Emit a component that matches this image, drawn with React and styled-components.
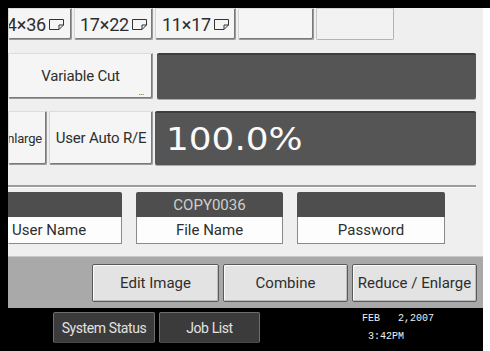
import React from 'react'
import styled, { createGlobalStyle } from "styled-components";

const GlobalStyle = createGlobalStyle`
  html, body {
    margin: 0;
    padding: 0;
    background: #fff;
  }
  body {
    font-family: Roboto, "Liberation Sans", sans-serif;
  }
`;

const Frame = styled.div`
  width: 490px;
  border-top: 8px solid #000;
`;

const Screen = styled.div`
  width: 475px;
  height: 343px;
  border-left: 8px solid #000;
  background: #efefef;
  display: flex;
  flex-direction: column;
  overflow: hidden;
`;

const Row = styled.div`
  display: flex;
  gap: ${p => p.gap || 2}px;
  height: ${p => p.h}px;
  margin-top: ${p => p.top || 0}px;
  flex-shrink: 0;
`;

const Key = styled.div`
  position: relative;
  box-sizing: border-box;
  width: ${p => p.w}px;
  flex-shrink: 0;
  display: flex;
  align-items: center;
  justify-content: ${p => (p.clip ? "flex-end" : "center")};
  padding-right: ${p => (p.clip ? p.pr || 4 : 0)}px;
  overflow: hidden;
  white-space: nowrap;
  background: ${p => (p.flat ? "#f2f2f2" : "#f5f5f5")};
  border: 1px solid ${p => (p.flat ? "#b4b4b4" : "#9a9a9a")};
  border-top-color: ${p => (p.flat ? "#d0d0d0" : "#dcdcdc")};
  border-left-color: ${p => (p.flat ? "#c8c8c8" : "#d6d6d6")};
  box-shadow: ${p => (p.flat ? "none" : "inset -1px -1px 0 #7a7a7a")};
  border-radius: 0 0 2px 2px;
  color: #2e2e2e;
  font-size: ${p => p.fs || 15}px;
  letter-spacing: -0.2px;
`;

const Dots = styled.span`
  position: absolute;
  right: 8px;
  bottom: 1px;
  font-size: 9px;
  line-height: 9px;
  color: #444;
  letter-spacing: -0.5px;
`;

const Display = styled.div`
  box-sizing: border-box;
  width: ${p => p.w}px;
  flex-shrink: 0;
  background: #555555;
  border-top: 2px solid #3e3e3e;
  border-radius: 2px;
  box-shadow: 0 1px 0 #aaa;
  display: flex;
  align-items: center;
  padding-left: 11px;
  color: #fafafa;
  font-family: "DejaVu Sans", sans-serif;
  font-size: 32px;
`;

const Ratio = styled.span`
  display: inline-block;
  transform: scaleX(1.12);
  transform-origin: left center;
`;

const Rule = styled.div`
  height: 2px;
  width: 468px;
  margin-top: 20px;
  background: #9c9c9c;
  border-bottom: 1px solid #fbfbfb;
  flex-shrink: 0;
`;

const Field = styled.div`
  width: ${p => p.w}px;
  flex-shrink: 0;
  display: flex;
  flex-direction: column;
  overflow: hidden;
`;

const FieldHead = styled.div`
  box-sizing: border-box;
  height: 25px;
  background: #4e4e4e;
  border-radius: ${p => (p.clip ? "0 2px 0 0" : "2px 2px 0 0")};
  color: #cfcfcf;
  font-size: 15px;
  display: flex;
  align-items: center;
  justify-content: center;
`;

const FieldBody = styled.div`
  box-sizing: border-box;
  height: 27px;
  background: #fdfdfd;
  border: 1px solid #8a8a8a;
  border-top: none;
  border-left-color: ${p => (p.clip ? "transparent" : "#8a8a8a")};
  display: flex;
  align-items: center;
  justify-content: ${p => (p.clip ? "flex-start" : "center")};
  padding-left: ${p => (p.clip ? 3 : 0)}px;
  color: #2e2e2e;
  font-size: 15px;
`;

const Tray = styled.div`
  margin-top: 12px;
  height: 51px;
  flex-shrink: 0;
  background: #a9a9a9;
  border-top: 1px solid #c8c8c8;
  display: flex;
  align-items: center;
  justify-content: flex-end;
  gap: 4px;
  padding-right: 6px;
`;

const TrayKey = styled.div`
  box-sizing: border-box;
  width: ${p => p.w}px;
  height: 38px;
  background: #e3e3e3;
  border: 1px solid #5a5a5a;
  box-shadow: inset 1px 1px 0 #fafafa, inset -1px -1px 0 #bdbdbd;
  border-radius: 2px;
  display: flex;
  align-items: center;
  justify-content: center;
  color: #2e2e2e;
  font-size: 15px;
`;

const StatusBar = styled.div`
  flex: 1;
  background: #000;
  display: flex;
  align-items: flex-start;
  padding-top: 4px;
  padding-left: 45px;
  gap: 4px;
`;

const DarkKey = styled.div`
  box-sizing: border-box;
  width: ${p => p.w}px;
  height: 31px;
  background: #3b3b3b;
  border: 1px solid #6e6e6e;
  border-bottom-color: #4a4a4a;
  border-radius: 2px;
  display: flex;
  align-items: center;
  justify-content: center;
  color: #e2e2e2;
  font-size: 14px;
  letter-spacing: -0.4px;
`;

const Clock = styled.div`
  margin-left: 98px;
  margin-top: -2px;
  color: #f0f0f0;
  font-family: "Liberation Mono", "DejaVu Sans Mono", monospace;
  font-size: 10px;
  line-height: 18px;
  white-space: pre;
`;

const SheetIcon = styled.svg`
  flex-shrink: 0;
  margin-left: 3px;
`;

const Sheet = () => (
  <SheetIcon width="15" height="12" viewBox="0 0 15 12">
    <path d="M0.5 1.5 H14.5 V7 L10 11.5 H0.5 Z M14.5 7 H10 V11.5" fill="none" stroke="#333" strokeWidth="1" />
  </SheetIcon>
);

const Size = ({ text }) => (
  <>
    {text}
    <Sheet />
  </>
);

function App() {
  return (
    <Frame>
      <GlobalStyle />
      <Screen>
        <Row h={32}>
          <Key w={64} clip pr={7} fs={18}><Size text="24×36" /></Key>
          <Key w={79} fs={18}><Size text="17×22" /></Key>
          <Key w={81} fs={18}><Size text="11×17" /></Key>
          <Key w={76} />
          <Key w={78} flat />
        </Row>
        <Row h={46} top={13} gap={4}>
          <Key w={145}>
            Variable Cut
            <Dots>...</Dots>
          </Key>
          <Display w={319} />
        </Row>
        <Row h={54} top={12} gap={2}>
          <Key w={39} clip fs={13}>Enlarge</Key>
          <Key w={104}>User Auto R/E</Key>
          <Display w={321}><Ratio>100.0%</Ratio></Display>
        </Row>
        <Rule />
        <Row h={52} top={4} gap={14}>
          <Field w={114}>
            <FieldHead clip />
            <FieldBody clip>User Name</FieldBody>
          </Field>
          <Field w={147}>
            <FieldHead>COPY0036</FieldHead>
            <FieldBody>File Name</FieldBody>
          </Field>
          <Field w={148}>
            <FieldHead />
            <FieldBody>Password</FieldBody>
          </Field>
        </Row>
        <Tray>
          <TrayKey w={127}>Edit Image</TrayKey>
          <TrayKey w={125}>Combine</TrayKey>
          <TrayKey w={125}>Reduce / Enlarge</TrayKey>
        </Tray>
        <StatusBar>
          <DarkKey w={102}>System Status</DarkKey>
          <DarkKey w={101}>Job List</DarkKey>
          <Clock>{"FEB   2,2007\n 3:42PM"}</Clock>
        </StatusBar>
      </Screen>
    </Frame>
  )
}

export default App
